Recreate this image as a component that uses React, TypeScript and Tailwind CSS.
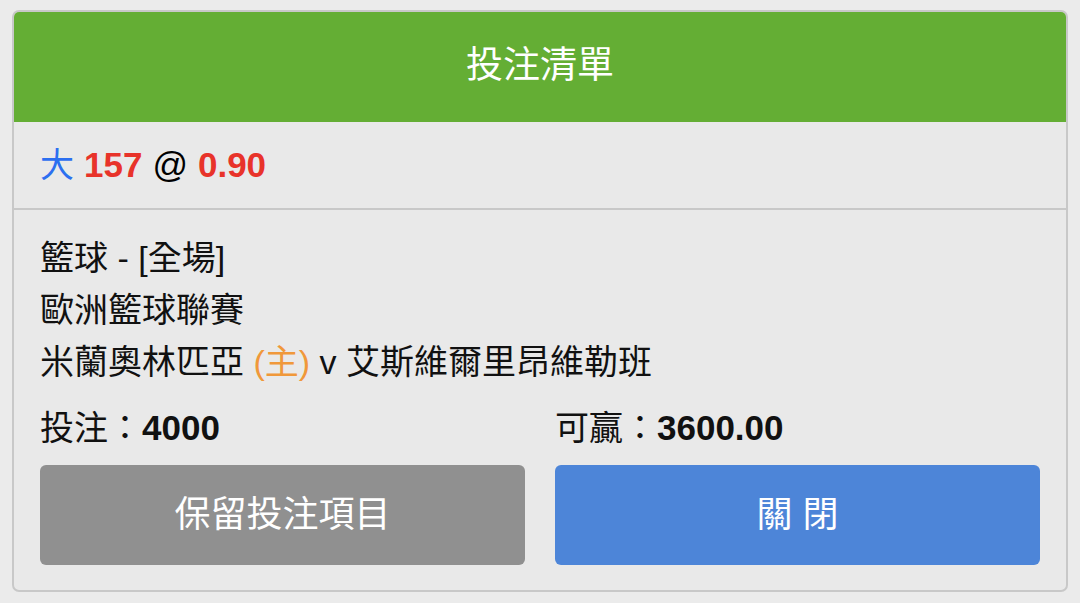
const font = "font-['Liberation_Sans','Noto_Sans_CJK_TC',sans-serif]";

export default function App() {
    return (
        <div className={`w-[1080px] h-[603px] bg-[#ebebeb] pt-[10px] px-[12px] ${font}`}>
            <div className="rounded-[7px] border-2 border-[#c8c8c8] bg-[#e9e9e9] overflow-hidden">
                <div className="h-[112px] -mx-[2px] -mt-[2px] bg-[#64ae34] flex items-center justify-center text-white text-[37px]">
                    投注清單
                </div>

                <div className="h-[88px] flex items-center px-[26px] text-[35px] border-b-2 border-[#c8c8c8]">
                    <span className="text-[#2c6ff0] text-[34px]">大</span>
                    <span className="ml-[10px] font-bold text-[#e8332a]">157</span>
                    <span className="ml-[10px] text-black">@</span>
                    <span className="ml-[10px] font-bold text-[#e8332a]">0.90</span>
                </div>

                <div className="px-[26px] pt-[22px] pb-[25px] text-[34px] leading-[52px] text-[#111]">
                    <p>籃球 - [全場]</p>
                    <p>歐洲籃球聯賽</p>
                    <p>
                        米蘭奧林匹亞 <span className="text-[#f0983a]">(主)</span> v 艾斯維爾里昂維勒班
                    </p>

                    <div className="grid grid-cols-2 gap-[30px] mt-[14px]">
                        <p>投注：<span className="font-bold text-[35px]">4000</span></p>
                        <p>可贏：<span className="font-bold text-[35px]">3600.00</span></p>
                    </div>

                    <div className="grid grid-cols-2 gap-[30px] mt-[11px]">
                        <button className="h-[100px] rounded-[6px] bg-[#909090] text-white text-[36px]">
                            保留投注項目
                        </button>
                        <button className="h-[100px] rounded-[6px] bg-[#4d85d8] text-white text-[36px]">
                            關 閉
                        </button>
                    </div>
                </div>
            </div>
        </div>
    );
}
